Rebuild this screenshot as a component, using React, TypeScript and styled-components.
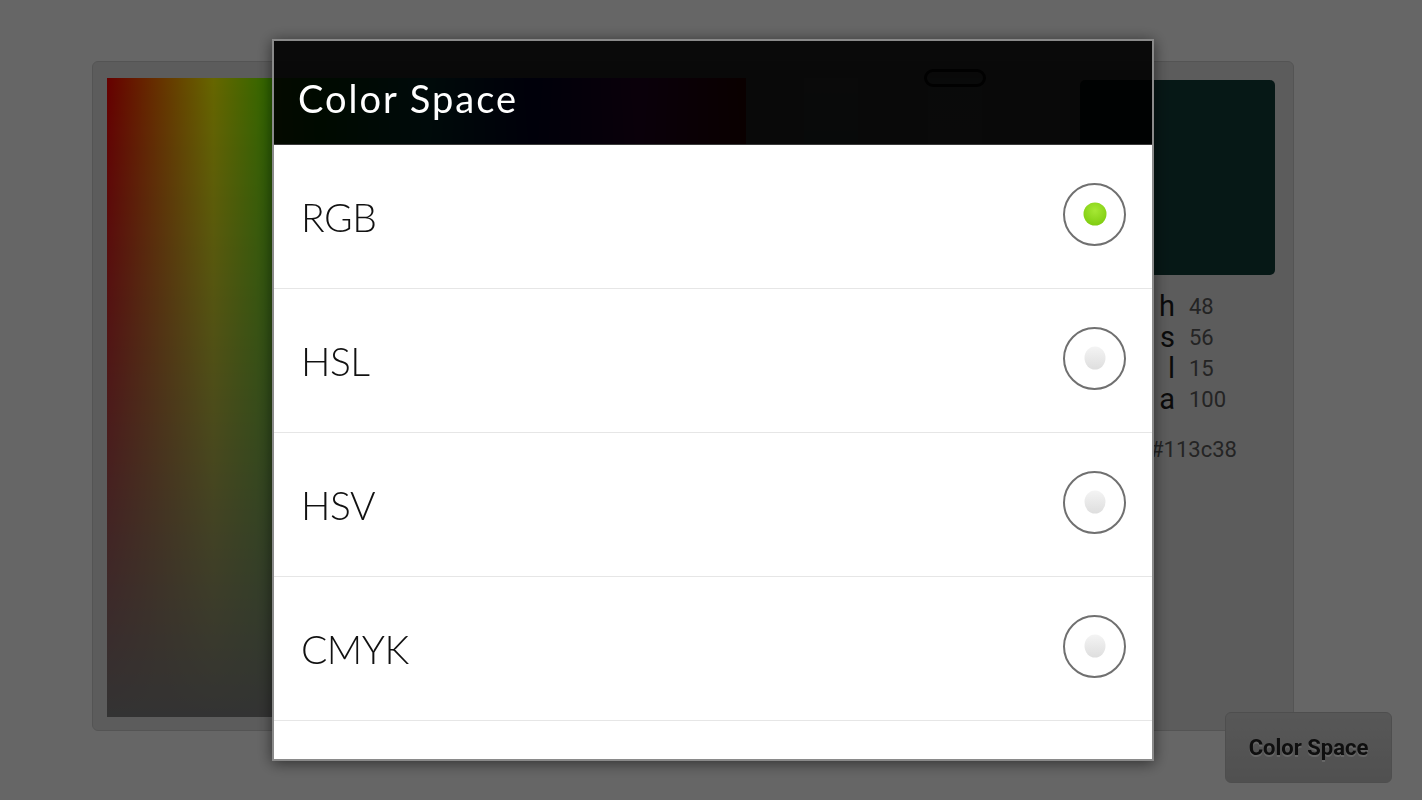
import React from 'react'
import styled, { createGlobalStyle } from 'styled-components'

const GlobalStyle = createGlobalStyle`
  html, body {
    margin: 0;
    padding: 0;
    background: #ffffff;
    font-family: Roboto, 'Liberation Sans', sans-serif;
  }
`

const Page = styled.div`
  width: 1422px;
  height: 800px;
  box-sizing: border-box;
  padding: 61px 0 0 92px;
  overflow: hidden;
`

const Card = styled.div`
  width: 1202px;
  height: 670px;
  box-sizing: border-box;
  display: flex;
  align-items: flex-start;
  padding: 16px 18px 13px 14px;
  background: #e6e6e6;
  border: 1px solid #d2d2d2;
  border-radius: 6px;
`

const Picker = styled.div`
  width: 639px;
  height: 639px;
  flex-shrink: 0;
  background:
    linear-gradient(to bottom, rgba(128, 128, 128, 0), #808080),
    linear-gradient(to right, #ff0000, #ffff00, #00ff00, #00ffff, #0000ff, #ff00ff, #ff0000);
`

const Slider = styled.div<{ $offset: number; $fill: string }>`
  position: relative;
  width: 54px;
  height: 639px;
  flex-shrink: 0;
  margin-left: ${(p) => p.$offset}px;
  background: ${(p) => p.$fill};
`

const Handle = styled.div`
  position: absolute;
  left: -4px;
  right: -4px;
  top: -9px;
  height: 12px;
  border: 3px solid #1a1a1a;
  border-radius: 10px;
`

const ColorColumn = styled.div`
  width: 195px;
  margin: 2px 0 0 98px;
  display: flex;
  flex-direction: column;
`

const Swatch = styled.div`
  width: 195px;
  height: 195px;
  border-radius: 5px;
  background: #113c38;
`

const Values = styled.div`
  display: grid;
  grid-template-columns: 95px auto;
  column-gap: 14px;
  margin-top: 16px;
`

const Key = styled.span`
  text-align: right;
  font-size: 29px;
  line-height: 31px;
  color: #1c1c1c;
`

const Value = styled.span`
  font-size: 22px;
  line-height: 31px;
  color: #5a5a5a;
`

const Hex = styled.div`
  margin: 20px 0 0 70px;
  font-size: 22px;
  line-height: 30px;
  color: #5a5a5a;
`

const ActionButton = styled.button`
  position: fixed;
  right: 30px;
  bottom: 17px;
  width: 167px;
  height: 71px;
  border: 1px solid #c2c2c2;
  border-radius: 6px;
  background: linear-gradient(to bottom, #dadada, #c8c8c8);
  font-family: Roboto, 'Liberation Sans', sans-serif;
  font-weight: 700;
  font-size: 22px;
  color: #262626;
  text-shadow: 0 2px 0 #ffffff;
`

const Dim = styled.div`
  position: fixed;
  inset: 0;
  box-sizing: border-box;
  padding: 0 0 0 4px;
  background: rgba(0, 0, 0, 0.6);
  display: flex;
  align-items: center;
  justify-content: center;
`

const Dialog = styled.div`
  width: 882px;
  height: 722px;
  box-sizing: border-box;
  display: flex;
  flex-direction: column;
  border: 2px solid #8a8a8a;
  box-shadow: 0 2px 14px rgba(0, 0, 0, 0.55);
  overflow: hidden;
`

const Header = styled.div`
  height: 104px;
  flex-shrink: 0;
  box-sizing: border-box;
  display: flex;
  align-items: center;
  padding: 10px 0 0 24px;
  background: rgba(0, 0, 0, 0.9);
  border-bottom: 1px solid #3a3a3a;
`

const Title = styled.h2`
  margin: 0;
  font-family: Lato, 'Noto Sans', sans-serif;
  font-weight: 400;
  font-size: 38px;
  letter-spacing: 2px;
  color: #ffffff;
`

const List = styled.div`
  flex: 1;
  overflow: hidden;
  background: #ffffff;
`

const Row = styled.div`
  height: 143px;
  display: flex;
  align-items: center;
  justify-content: space-between;
  padding: 0 26px 0 27px;
  border-bottom: 1px solid #e6e6e6;
`

const Label = styled.span`
  font-family: Lato, 'Noto Sans', sans-serif;
  font-weight: 300;
  font-size: 39px;
  letter-spacing: -0.5px;
  color: #111111;
`

const Radio = styled.span<{ $checked?: boolean }>`
  position: relative;
  margin-top: -5px;
  margin-left: auto;
  width: 59px;
  height: 59px;
  border-radius: 50%;
  border: 2.5px solid #707070;
  background: #ffffff;

  &::after {
    content: '';
    position: absolute;
    left: 50%;
    top: 50%;
    width: ${(p) => (p.$checked ? 23 : 21)}px;
    height: 23px;
    transform: translate(-50%, -50%);
    border-radius: 50%;
    background: ${(p) =>
      p.$checked
        ? 'radial-gradient(circle at 50% 35%, #a6e834, #84d014 70%, #78c010)'
        : 'linear-gradient(to bottom, #f4f4f4, #dedede)'};
  }
`

const spaces = ['RGB', 'HSL', 'HSV', 'CMYK']

const readout = [
  ['h', '48'],
  ['s', '56'],
  ['l', '15'],
  ['a', '100'],
]

export default function App() {
  return (
    <>
      <GlobalStyle />
      <Page>
        <Card>
          <Picker />
          <Slider $offset={58} $fill="linear-gradient(to bottom, #f2fbfa, #3fb8ad 45%, #000000)" />
          <Slider $offset={70} $fill="linear-gradient(to bottom, #e8eeee, #f4f4f4)">
            <Handle />
          </Slider>
          <ColorColumn>
            <Swatch />
            <Values>
              {readout.map(([k, v]) => (
                <React.Fragment key={k}>
                  <Key>{k}</Key>
                  <Value>{v}</Value>
                </React.Fragment>
              ))}
            </Values>
            <Hex>#113c38</Hex>
          </ColorColumn>
        </Card>
        <ActionButton>Color Space</ActionButton>
      </Page>
      <Dim>
        <Dialog>
          <Header>
            <Title>Color Space</Title>
          </Header>
          <List>
            {spaces.map((s, i) => (
              <Row key={s}>
                <Label>{s}</Label>
                <Radio $checked={i === 0} />
              </Row>
            ))}
            {/* next entry, scrolled below the fold */}
            <Row>
              <Radio />
            </Row>
          </List>
        </Dialog>
      </Dim>
    </>
  )
}
